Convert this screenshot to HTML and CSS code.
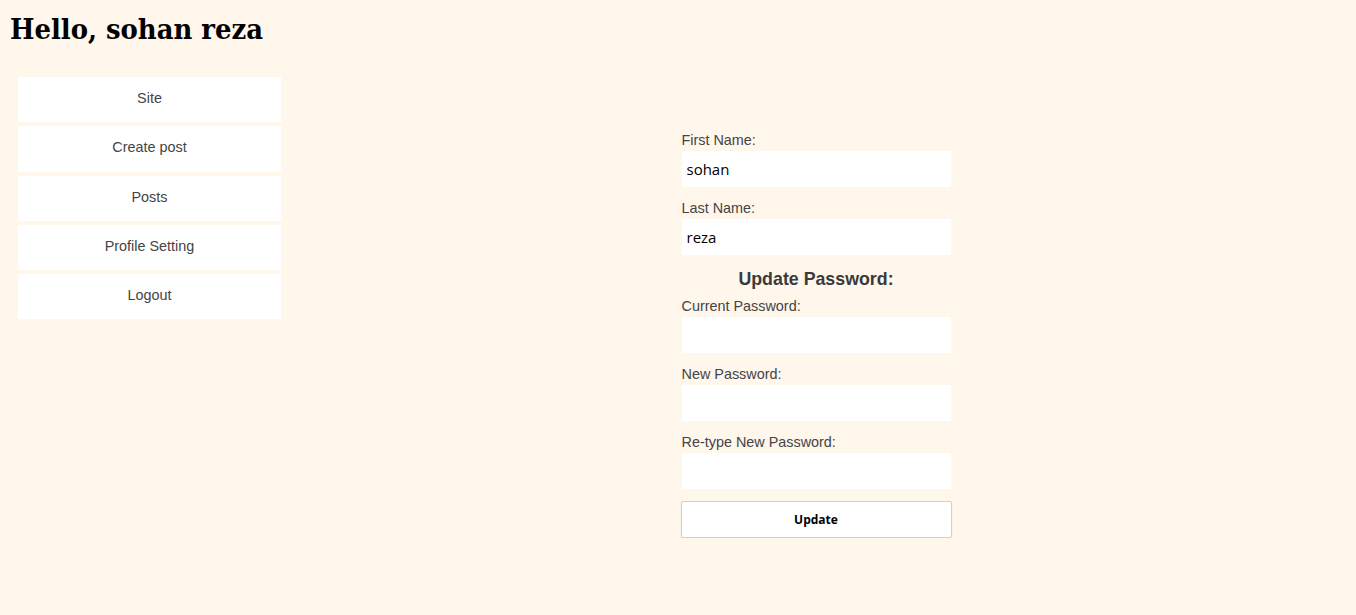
FILE: index.html
```html
<!DOCTYPE html>
<html>
<head>
<meta charset="utf-8">
<link rel="stylesheet" href="styles.css">
</head>
<body>
<h1 class="greeting">Hello, sohan reza</h1>
<div class="layout">
  <nav class="sidebar">
    <a class="nav-item" href="#">Site</a>
    <a class="nav-item" href="#">Create post</a>
    <a class="nav-item" href="#">Posts</a>
    <a class="nav-item" href="#">Profile Setting</a>
    <a class="nav-item" href="#">Logout</a>
  </nav>
  <main class="main">
    <form class="profile-form">
      <label class="field-label">First Name:</label>
      <input class="field-input" type="text" value="sohan">
      <label class="field-label">Last Name:</label>
      <input class="field-input" type="text" value="reza">
      <h3 class="section-title">Update Password:</h3>
      <label class="field-label">Current Password:</label>
      <input class="field-input" type="password">
      <label class="field-label">New Password:</label>
      <input class="field-input" type="password">
      <label class="field-label">Re-type New Password:</label>
      <input class="field-input" type="password">
      <button class="submit-btn" type="button">Update</button>
    </form>
  </main>
</div>
</body>
</html>
```

FILE: styles.css
```css
html, body {
  margin: 0;
  padding: 0;
  background: #fff6ec;
}
body {
  padding: 0 5px 0 10px;
}
.greeting {
  font-family: "DejaVu Serif", serif;
  font-stretch: condensed;
  font-weight: bold;
  font-size: 28.8px;
  line-height: 40px;
  margin: 9px 0 0 0;
  color: #000;
}
.layout {
  display: flex;
  margin-top: 28px;
}
.sidebar {
  display: flex;
  flex-direction: column;
  gap: 4px;
  width: 263px;
  margin-left: 8px;
}
.nav-item {
  display: flex;
  align-items: center;
  justify-content: center;
  height: 45.3px;
  box-sizing: border-box;
  padding-bottom: 3px;
  background: #fff;
  color: #444;
  text-decoration: none;
  font-family: "Liberation Sans", Arial, sans-serif;
  font-size: 14.4px;
}
.main {
  flex: 1;
  display: flex;
  justify-content: center;
  padding-top: 55px;
}
.profile-form {
  width: 269px;
  display: flex;
  flex-direction: column;
}
.field-label {
  font-family: "Liberation Sans", Arial, sans-serif;
  font-size: 14.4px;
  color: #444;
  line-height: 17px;
  padding-bottom: 2px;
}
.field-input {
  height: 36px;
  box-sizing: border-box;
  border: none;
  outline: none;
  background: #fff;
  padding: 0 5px;
  margin: 0 0 13px 0;
  font-family: "Open Sans", sans-serif;
  font-size: 15px;
  color: #000;
}
.section-title {
  font-family: "Liberation Sans", Arial, sans-serif;
  font-size: 17.8px;
  font-weight: bold;
  color: #3a3a3a;
  text-align: center;
  margin: 0 0 8px 0;
  line-height: 22px;
}
.submit-btn {
  height: 37px;
  margin-left: -1px;
  margin-top: -1px;
  width: 271px;
  background: #fff;
  border: 1px solid #d8cfc4;
  border-radius: 2px;
  box-shadow: 0 1px 2px rgba(0,0,0,0.08);
  font-family: "Open Sans", sans-serif;
  font-weight: bold;
  font-size: 12px;
  color: #000;
}
```
